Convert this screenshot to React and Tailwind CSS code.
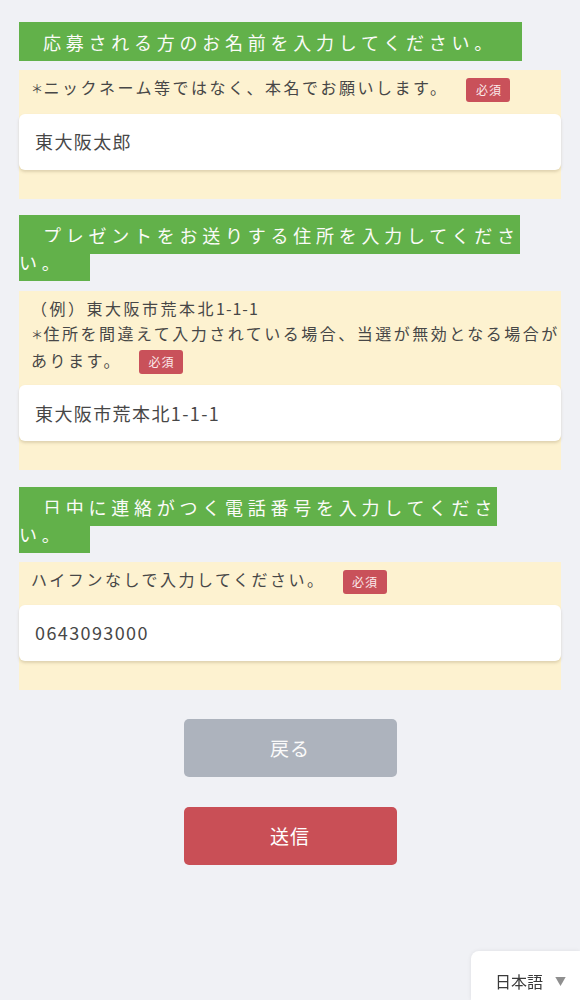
import React from "react";

function Badge({ ml }) {
  return (
    <span className={"inline-flex items-center justify-center align-middle w-[44px] h-[24px] rounded-[3px] bg-[#c9515a] text-[#fbe9ea] text-[12px] leading-[24px] tracking-[1px] indent-[1px] " + ml}>
      必須
    </span>
  );
}

function Heading({ children }) {
  return (
    <div className="text-[18px] leading-[27px] tracking-[4.75px]">
      <span className="bg-[#62b14a] text-[#fbfbf8] py-[6.5px] pl-[24px] pr-[25px]">{children}</span>
    </div>
  );
}

function Input({ value, className }) {
  return (
    <div
      className={
        "h-[56px] rounded-[6px] bg-white shadow-[0_2px_3px_rgba(120,100,60,0.22)] px-[16px] flex items-center text-[18px] tracking-[1.4px] text-[#474747] " +
        className
      }
    >
      {value}
    </div>
  );
}

function Star() {
  return <span className="text-[12px] tracking-[0.5px]">＊</span>;
}

const desc =
  "pt-[5px] pl-[12px] pr-0 text-[16px] leading-[25.5px] tracking-[2.5px] text-[#474747]";

export default function App() {
  return (
    <div className="min-h-screen bg-[#f0f1f5] font-['Noto_Sans_CJK_JP',sans-serif]">
      <div className="pt-[28px] px-[19px]">
        {/* Section 1 */}
        <Heading>応募される方のお名前を入力してください。</Heading>
        <div className="mt-[15px] bg-[#fdf2d0] pb-[29px]">
          <div className={desc}>
            <Star />ニックネーム等ではなく、本名でお願いします。<Badge ml="ml-[18px]" />
          </div>
          <Input value="東大阪太郎" className="mt-[12px]" />
        </div>

        {/* Section 2 */}
        <div className="mt-[23px]">
          <Heading>プレゼントをお送りする住所を入力してください。</Heading>
        </div>
        <div className="mt-[15px] bg-[#fdf2d0] pb-[29px]">
          <div className={desc}>
            （例）東大阪市荒本北<span className="tracking-[1px]">1-1-1</span>
            <br />
            <Star />住所を間違えて入力されている場合、当選が無効となる場合があります。<Badge ml="ml-[17px]" />
          </div>
          <Input value="東大阪市荒本北1-1-1" className="mt-[11px]" />
        </div>

        {/* Section 3 */}
        <div className="mt-[23px]">
          <Heading>日中に連絡がつく電話番号を入力してください。</Heading>
        </div>
        <div className="mt-[15px] bg-[#fdf2d0] pb-[29px]">
          <div className={desc}>
            ハイフンなしで入力してください。<Badge ml="ml-[17px]" />
          </div>
          <Input value="0643093000" className="mt-[11px]" />
        </div>

        {/* Buttons */}
        <div className="mt-[29px] flex flex-col items-center gap-[30px]">
          <button className="w-[213px] h-[58px] rounded-[5px] bg-[#adb3bd] text-[#fafafa] text-[19px] tracking-[1px]">
            戻る
          </button>
          <button className="w-[213px] h-[58px] rounded-[5px] bg-[#c94f56] text-white text-[19px] tracking-[1px]">
            送信
          </button>
        </div>
      </div>

      {/* Language selector */}
      <div className="fixed right-0 bottom-0 w-[109px] h-[49px] bg-white rounded-tl-[8px] shadow-[0_0_4px_rgba(0,0,0,0.08)] pt-[20px] pl-[24px] flex items-start text-[16px] leading-[20px] text-[#3a3a3a]">
        <span>日本語</span>
        <span className="ml-[12px] text-[11px] leading-[20px] text-[#8f8f8f]">▼</span>
      </div>
    </div>
  );
}
